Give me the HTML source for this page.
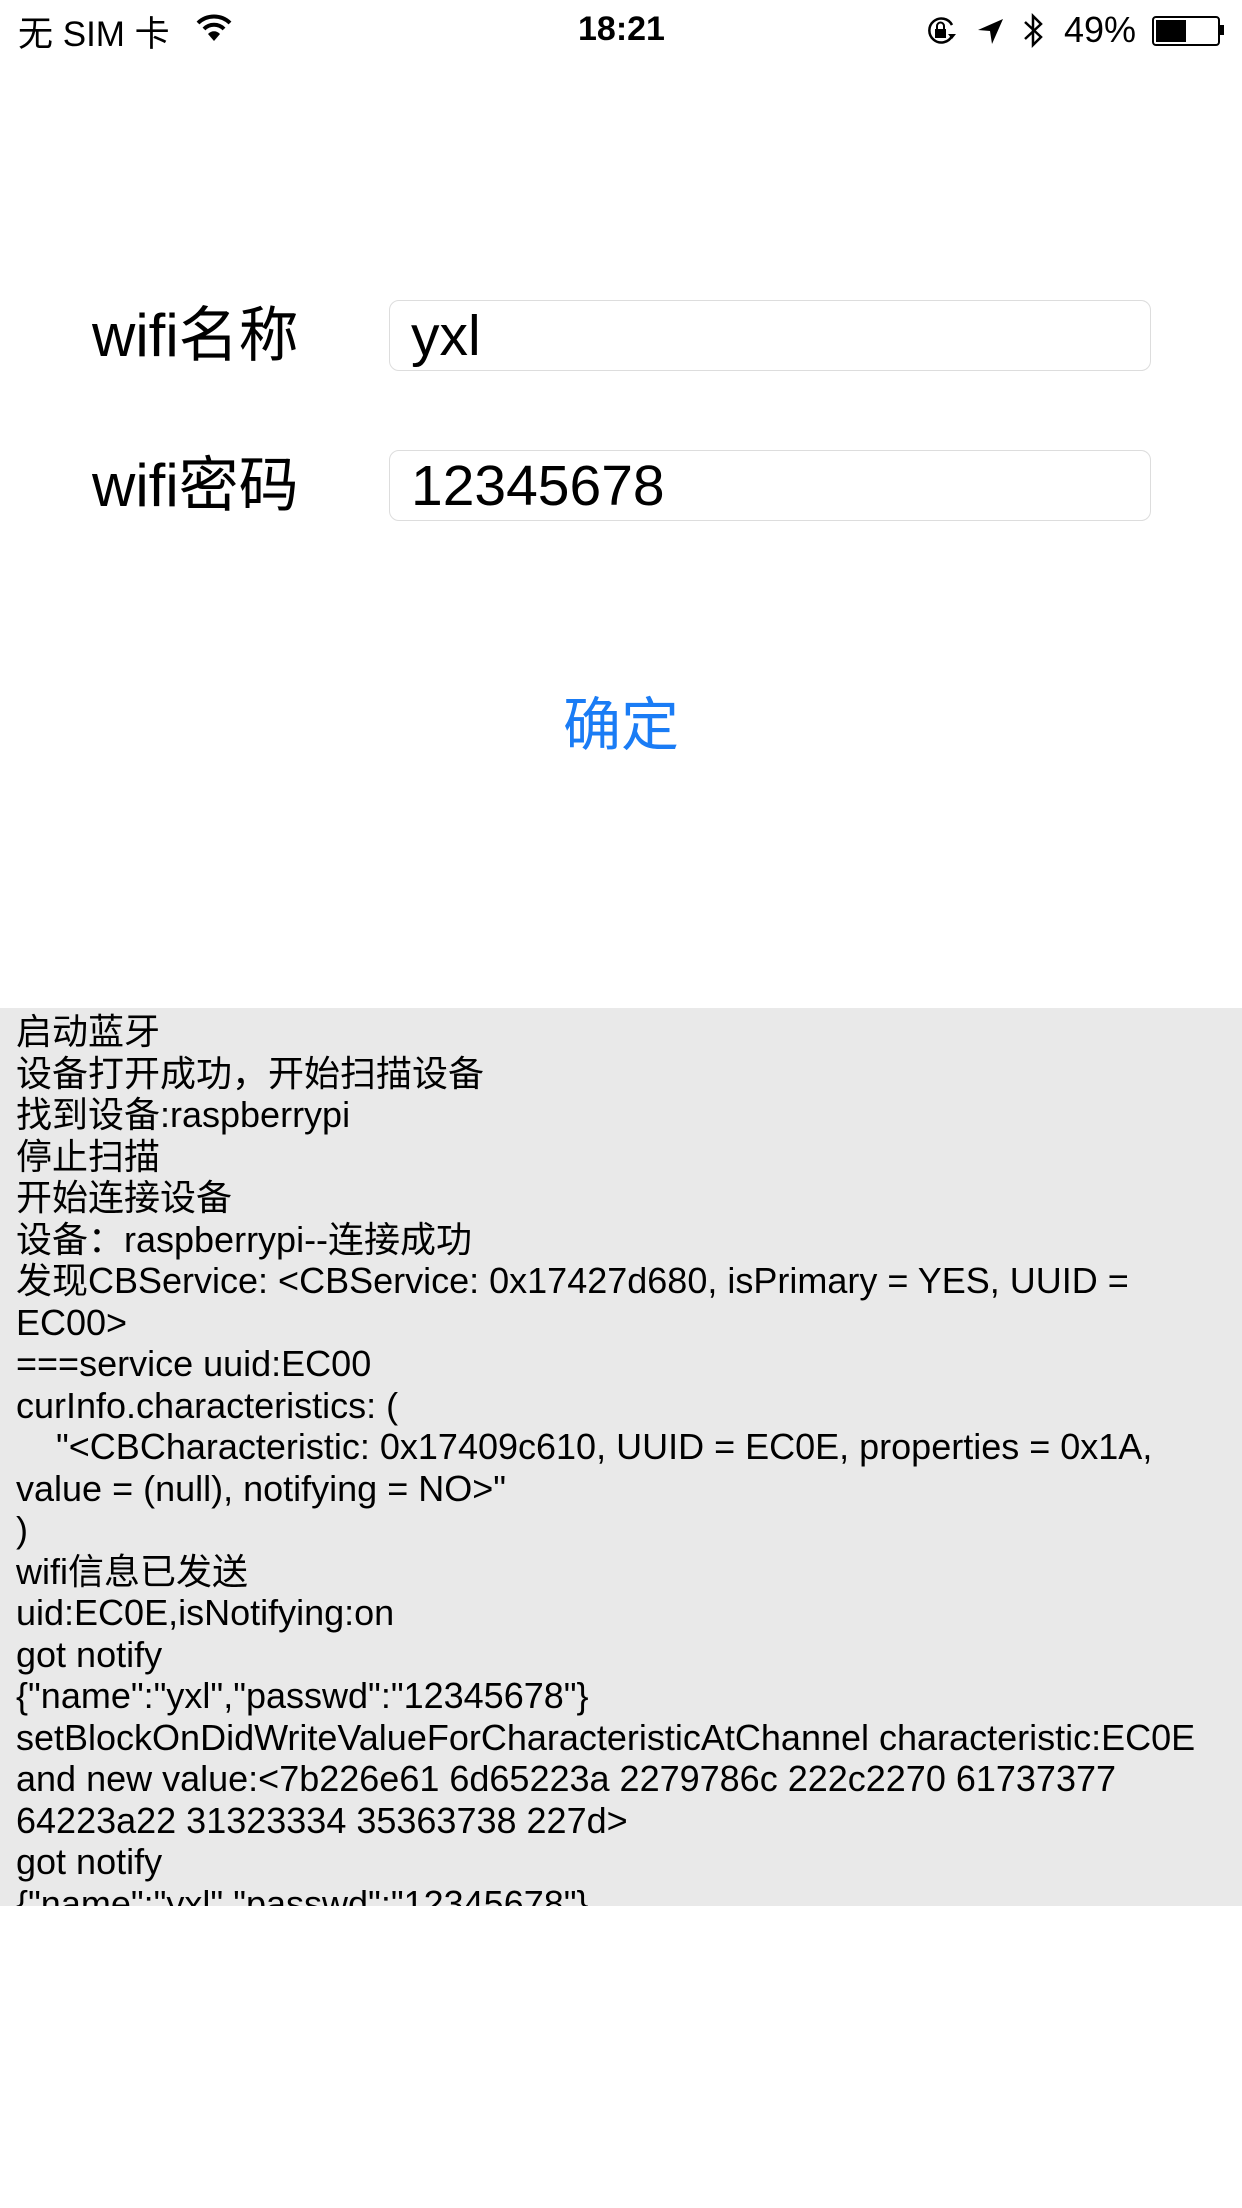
<!DOCTYPE html>
<html><head><meta charset="utf-8"><style>
body{margin:0;width:1242px;height:2208px;background:#fff;position:relative;overflow:hidden;font-family:"Liberation Sans","Noto Sans CJK SC",sans-serif;color:#000}
.a{position:absolute;white-space:nowrap}
.inp{position:absolute;left:389px;width:762px;height:71px;border:1.5px solid #ddd;border-radius:10px;box-sizing:border-box}
#log{position:absolute;left:0;top:1008px;width:1242px;height:898px;background:#e9e9e9;overflow:hidden}
#log div{position:absolute;left:16px;top:3px;font-size:36px;line-height:41.5px;white-space:pre}
</style></head><body>
<div class="a" style="left:18px;top:6px;font-size:35px">无 SIM 卡</div>
<svg class="a" style="left:196px;top:14px" width="36" height="28" viewBox="0 0 36 28"><path d="M2 9 A23 23 0 0 1 34 9" stroke="#000" stroke-width="4" fill="none"/><path d="M8 15 A14 14 0 0 1 28 15" stroke="#000" stroke-width="4" fill="none"/><path d="M18 27 L12 20 A8 8 0 0 1 24 20Z" fill="#000"/></svg>
<div class="a" style="left:578px;top:10px;font-size:34px;font-weight:bold">18:21</div>
<svg class="a" style="left:925px;top:16px" width="34" height="30" viewBox="0 0 34 30"><path d="M27 20 A12 12 0 1 1 27 9" stroke="#000" stroke-width="2.5" fill="none"/><path d="M23 18 L31 18 L27 23Z" fill="#000"/><rect x="10" y="13" width="11" height="9" fill="#000"/><path d="M12 13 V10 A3.5 3.5 0 0 1 19 10 V13" stroke="#000" stroke-width="2" fill="none"/></svg>
<svg class="a" style="left:977px;top:18px" width="28" height="28" viewBox="0 0 28 28"><path d="M26 1 L1 12 L13 13 L15 26Z" fill="#000"/></svg>
<svg class="a" style="left:1022px;top:12px" width="24" height="38" viewBox="0 0 24 38"><path d="M3 10 L19 25 L11 33 L11 4 L19 12 L3 27" stroke="#000" stroke-width="2.5" fill="none"/></svg>
<div class="a" style="left:1064px;top:9px;font-size:36px">49%</div>
<div class="a" style="left:1152px;top:16px;width:64px;height:26px;border:2px solid #000;border-radius:4px"></div>
<div class="a" style="left:1156px;top:20px;width:30px;height:22px;background:#000"></div>
<div class="a" style="left:1220px;top:25px;width:4px;height:10px;background:#000"></div>

<div class="a" style="left:92px;top:300px;font-size:60px;line-height:72px">wifi名称</div>
<div class="inp" style="top:300px"></div>
<div class="a" style="left:411px;top:300px;font-size:57px;line-height:72px">yxl</div>
<div class="a" style="left:92px;top:450px;font-size:60px;line-height:72px">wifi密码</div>
<div class="inp" style="top:450px"></div>
<div class="a" style="left:411px;top:450px;font-size:57px;line-height:72px">12345678</div>
<div class="a" style="left:563px;top:690px;font-size:58px;line-height:72px;color:#1a7cf5">确定</div>

<div id="log"><div>启动蓝牙
设备打开成功，开始扫描设备
找到设备:raspberrypi
停止扫描
开始连接设备
设备：raspberrypi--连接成功
发现CBService: &lt;CBService: 0x17427d680, isPrimary = YES, UUID =
EC00&gt;
===service uuid:EC00
curInfo.characteristics: (
    "&lt;CBCharacteristic: 0x17409c610, UUID = EC0E, properties = 0x1A,
value = (null), notifying = NO&gt;"
)
wifi信息已发送
uid:EC0E,isNotifying:on
got notify
{"name":"yxl","passwd":"12345678"}
setBlockOnDidWriteValueForCharacteristicAtChannel characteristic:EC0E
and new value:&lt;7b226e61 6d65223a 2279786c 222c2270 61737377
64223a22 31323334 35363738 227d&gt;
got notify
{"name":"yxl","passwd":"12345678"}</div></div>
</body></html>
